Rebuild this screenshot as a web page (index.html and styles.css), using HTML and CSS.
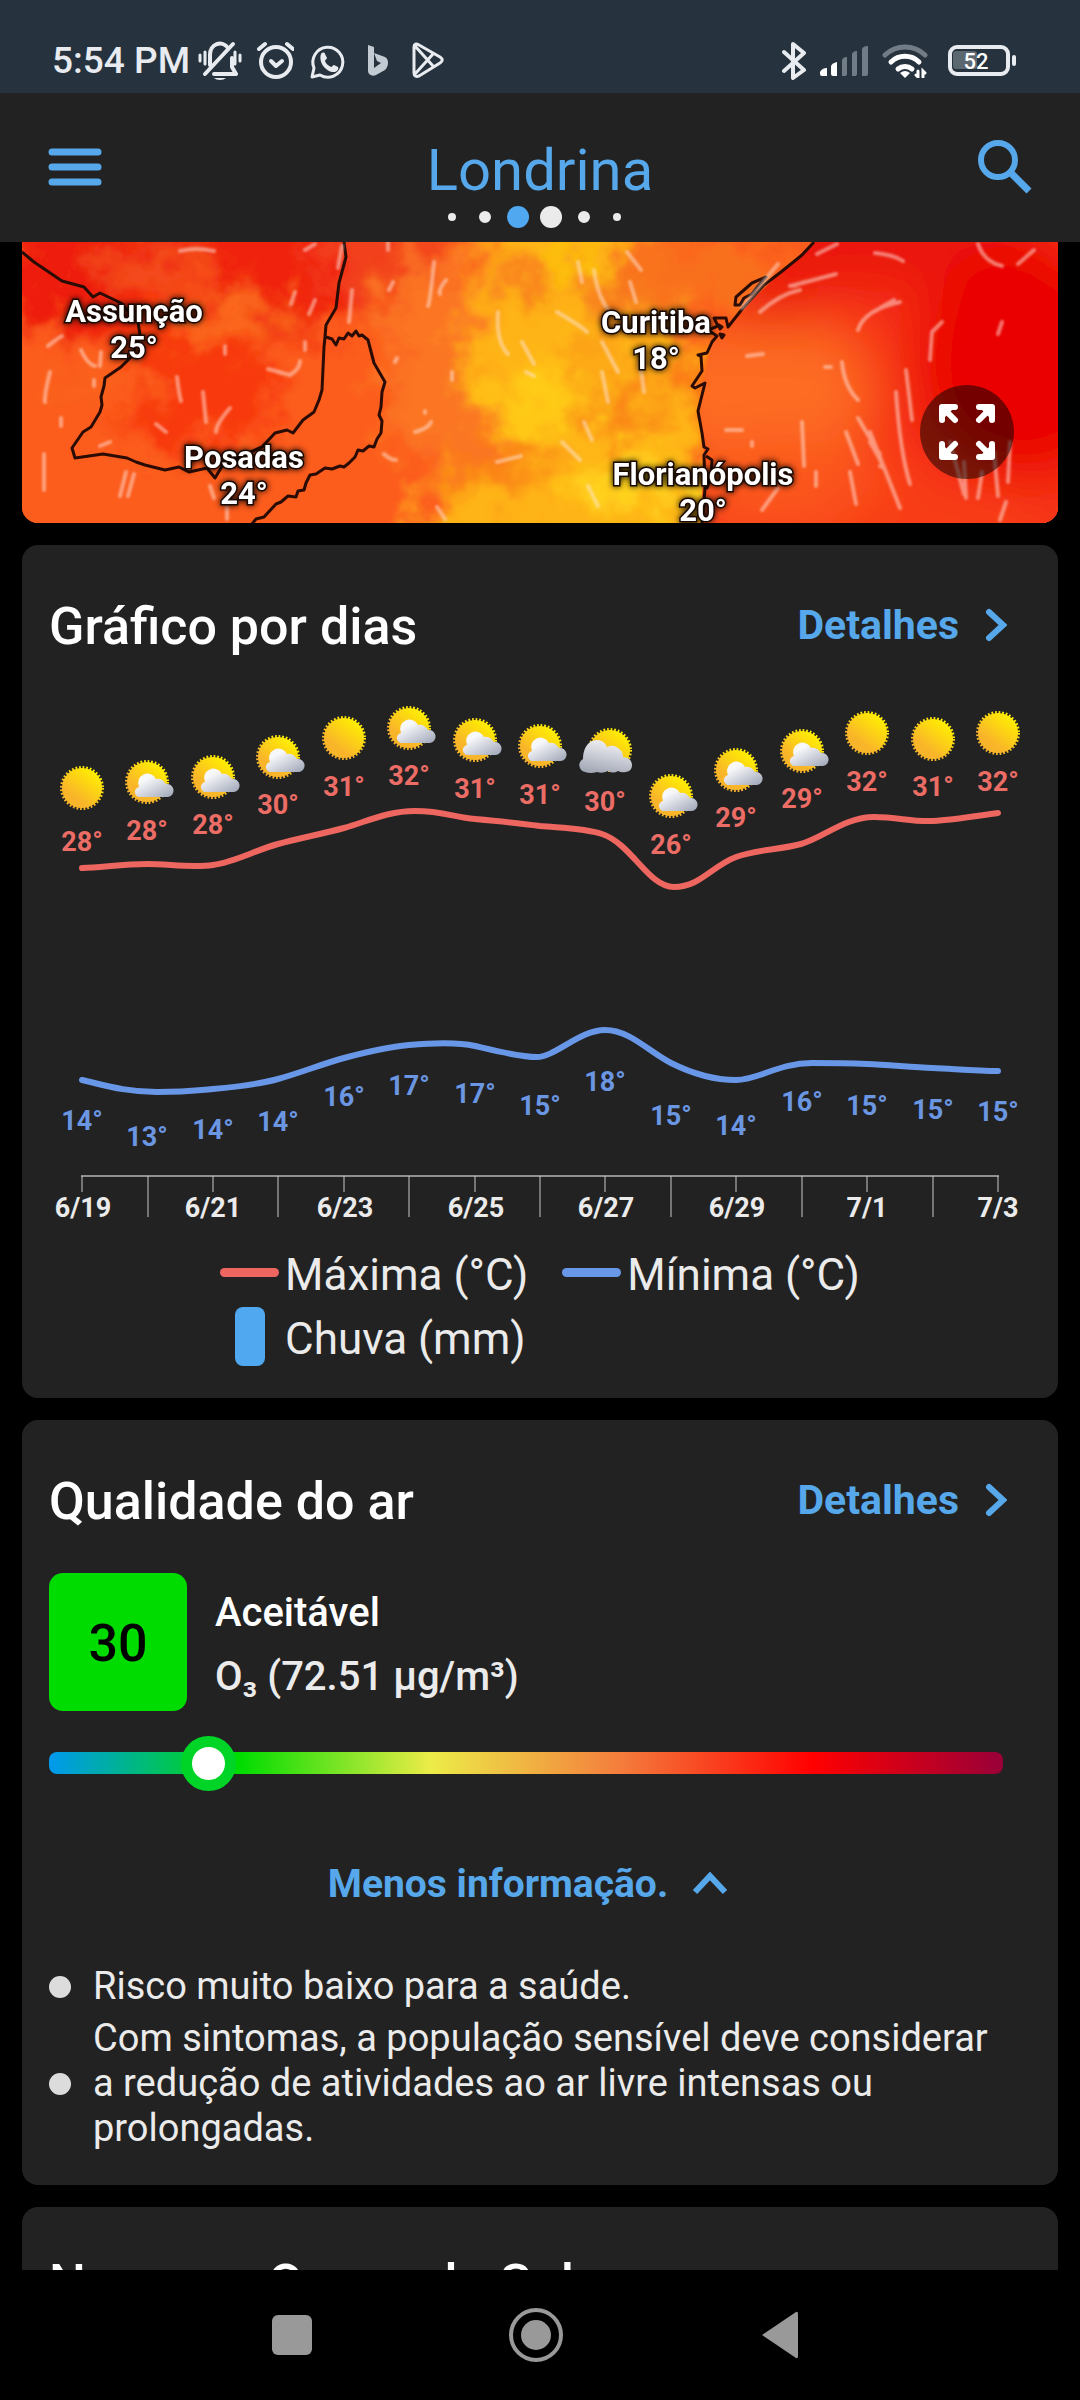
FILE: index.html
```html
<!DOCTYPE html>
<html lang="pt-BR">
<head>
  <meta charset="UTF-8" />
  <meta name="viewport" content="width=device-width, initial-scale=1" />
  <title>Londrina</title>
  <link rel="stylesheet" href="styles.css">
</head>
<body>
  <div class="status">
    <span class="time">5:54 PM</span>
    <div class="status-left">
      <svg width="44" height="40" viewBox="0 0 44 40" fill="none" stroke="#e8ecf0" stroke-linecap="round" stroke-linejoin="round">
        <path d="M12 24V14a10 11 0 0 1 18-7M34 17v9l4 7H16" stroke-width="4"/>
        <path d="M35 3L7 33" stroke-width="4"/>
        <path d="M2 14v6M7 11v12M37 11v12M42 14v6" stroke-width="3"/>
        <path d="M16 37a7 4 0 0 0 12 0z" fill="#e8ecf0" stroke="none"/>
      </svg>
      <svg width="44" height="40" viewBox="0 0 44 40" fill="none" stroke="#e8ecf0" stroke-linecap="round" stroke-linejoin="round">
        <circle cx="26" cy="21" r="15" stroke-width="4"/>
        <path d="M21 20l5 5 6-5" stroke-width="4"/>
        <path d="M9 8l6-5M43 8l-6-5" stroke-width="4"/>
      </svg>
      <svg width="44" height="40" viewBox="0 0 44 40">
        <path d="M10 36l2-9a15 15 0 1 1 6 7z" fill="none" stroke="#e8ecf0" stroke-width="3" stroke-linejoin="round"/>
        <path d="M19 13c1-2 4-2 4 0l2 4c0 1-2 2-2 3 1 3 3 4 6 6 1 0 2-2 3-2l4 2c1 1 0 4-3 5-8 1-17-9-14-18z" fill="#e8ecf0"/>
      </svg>
      <svg width="44" height="40" viewBox="0 0 44 40">
        <path d="M14 4l6 2v21l7-5-4-2-3-8 11 4c4 2 4 9 0 13l-9 5c-4 2-8-1-8-4z" fill="#c3cbd2"/>
      </svg>
      <svg width="44" height="40" viewBox="0 0 44 40" fill="none" stroke="#e8ecf0" stroke-width="3" stroke-linejoin="round">
        <path d="M8 6c0-3 2-4 5-2l21 12c3 2 3 4 0 6L13 35c-3 1-5 0-5-3zM9 5l18 20M9 33l18-20"/>
      </svg>
    </div>
    <div class="status-right">
      <svg width="24" height="38" viewBox="0 0 24 38" fill="none" stroke="#e8ecf0" stroke-width="4" stroke-linecap="round" stroke-linejoin="round">
        <path d="M2 10l20 18-11 8V2l11 9L2 29"/>
      </svg>
      <svg width="48" height="30" viewBox="0 0 48 30">
        <path d="M0 26q2-4 7-4v8H2q-2 0-2-2zM11 20q1-3 6-4v14h-4q-2 0-2-2z" fill="#fff"/>
        <path d="M22 14q1-3 5-3v17q0 2-2 2h-3zM32 8q1-3 5-3v23q0 2-2 2h-3zM42 3q1-3 6-3v28q0 2-2 2h-4z" fill="#717c86"/>
      </svg>
      <svg width="46" height="34" viewBox="0 0 46 34" fill="none" stroke="#fff" stroke-width="5" stroke-linecap="round">
        <path d="M3 11a29 29 0 0 1 40 0" stroke="#717c86"/>
        <path d="M9 18a20 20 0 0 1 28 0M16 25a11 11 0 0 1 14 0"/>
        <path d="M23 34l-5-5q5-4 10 0z" fill="#fff" stroke="none"/>
        <path d="M36 27v6l-2-2M41 33v-6l2 2" stroke-width="3"/>
      </svg>
      <svg class="batt" width="68" height="32" viewBox="0 0 68 32">
        <rect x="2" y="2" width="58" height="27" rx="7" fill="none" stroke="#e8ecf0" stroke-width="4"/>
        <rect x="5" y="6" width="24" height="18" rx="3" fill="#5c6870"/>
        <rect x="64" y="10" width="4" height="11" rx="2" fill="#e8ecf0"/>
        <text class="batt-num" x="28" y="24">52</text>
      </svg>
    </div>
  </div>

  <header class="topbar">
    <button class="icon-btn" aria-label="Menu">
      <svg width="54" height="38" viewBox="0 0 54 38" stroke="#56a8eb" stroke-width="7" stroke-linecap="round">
        <path d="M4 4h46M4 19h46M4 34h46"/>
      </svg>
    </button>
    <div class="place">
      <h1>Londrina</h1>
      <div class="dots">
        <i class="dot tiny"></i><i class="dot small"></i><i class="dot active"></i><i class="dot"></i><i class="dot small"></i><i class="dot tiny"></i>
      </div>
    </div>
    <button class="icon-btn search" aria-label="Buscar">
      <svg width="54" height="54" viewBox="0 0 54 54" fill="none" stroke="#56a8eb">
        <circle cx="20" cy="20" r="17" stroke-width="6"/>
        <path d="M33 33l18 18" stroke-width="7"/>
      </svg>
    </button>
  </header>

  <main>
    <section class="map">
      <svg class="map-img" viewBox="0 0 1036 281" preserveAspectRatio="xMidYMax slice">
        <defs>
          <filter id="heat" x="-10%" y="-20%" width="120%" height="140%">
            <feGaussianBlur stdDeviation="14" result="b"/>
            <feTurbulence type="fractalNoise" baseFrequency="0.03" numOctaves="4" seed="7"/>
            <feDisplacementMap in="b" scale="80" xChannelSelector="R" yChannelSelector="G"/>
            <feGaussianBlur stdDeviation="1"/>
          </filter>
          <filter id="sea" x="-20%" y="-20%" width="140%" height="140%">
            <feGaussianBlur stdDeviation="26"/>
          </filter>
          <filter id="soft"><feGaussianBlur stdDeviation="1"/></filter>
          <clipPath id="seaClip"><path d="M792 0L721 66 690 100 676 168 682 211 679 281H1036V0z"/></clipPath>
        </defs>
        <rect width="1036" height="281" fill="#fa5a1a"/>
        <g filter="url(#heat)">
          <rect x="-80" y="-80" width="1200" height="440" fill="#fc5c1a"/>
          <ellipse cx="70" cy="30" rx="110" ry="60" fill="#ee1c0e"/>
          <ellipse cx="240" cy="30" rx="110" ry="70" fill="#f0200e"/>
          <ellipse cx="170" cy="130" rx="90" ry="80" fill="#f8380f"/>
          <ellipse cx="130" cy="30" rx="60" ry="18" fill="#f4501a"/>
          <ellipse cx="210" cy="75" rx="60" ry="22" fill="#fb6a1c"/>
          <ellipse cx="80" cy="140" rx="60" ry="26" fill="#fb601c"/>
          <ellipse cx="370" cy="20" rx="70" ry="50" fill="#f2401a"/>
          <ellipse cx="420" cy="120" rx="60" ry="110" fill="#fb7420"/>
          <path d="M470 -40H620L660 100 690 180V330H380L430 240 480 200 440 120z" fill="#feb414"/>
          <ellipse cx="520" cy="160" rx="50" ry="35" fill="#ffcb14"/>
          <ellipse cx="610" cy="240" rx="60" ry="30" fill="#ffd21c"/>
          <ellipse cx="545" cy="20" rx="35" ry="20" fill="#fdc010"/>
          <ellipse cx="500" cy="40" rx="26" ry="18" fill="#f8701a"/>
          <ellipse cx="680" cy="30" rx="100" ry="36" fill="#f9701a"/>
          <ellipse cx="600" cy="60" rx="50" ry="20" fill="#f87a1a"/>
          <ellipse cx="595" cy="170" rx="36" ry="26" fill="#fa8418"/>
          <ellipse cx="480" cy="225" rx="50" ry="22" fill="#fb8418"/>
          <ellipse cx="660" cy="130" rx="24" ry="26" fill="#fb8418"/>
          <ellipse cx="570" cy="110" rx="24" ry="14" fill="#fb9418"/>
        </g>
        <g clip-path="url(#seaClip)">
          <g filter="url(#sea)">
            <rect x="600" y="-80" width="540" height="440" fill="#f63212"/>
            <ellipse cx="740" cy="150" rx="110" ry="80" fill="#fd6c20"/>
            <ellipse cx="770" cy="250" rx="110" ry="50" fill="#fb541c"/>
            <ellipse cx="880" cy="0" rx="150" ry="50" fill="#ea1408"/>
            <ellipse cx="750" cy="60" rx="46" ry="26" fill="#ea1008"/>
            <ellipse cx="1000" cy="120" rx="110" ry="120" fill="#ea0600"/>
            <ellipse cx="920" cy="290" rx="110" ry="50" fill="#f83c14"/>
          </g>
        </g>
        <g class="border">
          <path d="M0 10l12 10 28 19 22 6 9 10 7-4 21 10 17 19 2 13-9 22-10 10-16 11-1 8-3 11 1 8-2 7-9 15-8 5-11 16 3 10 28-4 24 4 9 4 9 3 20 5 14-3 10 5 18-4 8 10 9-15 38-16 13-14 12-3 6 3 10-13 11-8 5-12 3-10 2-43 1-10 1-12 10-17 3-25 7-26-2-15"/>
          <path d="M304 95l6 2 4 6 3-7 5 1 4-6 4 3 4-5 3 5 3-1 6 5 6 23 11 19-3 10-1 15-2 8 3 6-1 12-4 6-3 8-5-1-6 5-5-1-3 7-6 6-5 4-4-1-8 3-7-1-9 6-6 1-4 8-2 7-6 1-2 6-8-1-7 6-5 2-12 13-8 2-4 5"/>
          <path d="M792 0l-12 13-21 17-17 13-21 23-15 19-2-9-12 0 4 8-10 4 9 6-5 6-5 11-9 2 3 1 1 15-10 15 3 2 10-5-7 28 4 22 2 14 4 2-4 6 1 34-3 36"/>
          <path d="M744 35l-14 6-16 14-1 8 5 0 4-7 8-4 6-8zM697 83l3 2-2 2zM698 92l4 1-2 3zM684 214l6 4-1 16-4 12-3-8"/>
        </g>
        <g class="wind" filter="url(#soft)">
          <path d="M158 9q16-4 34 0M283 8l10-6M366 0v8M412 20q-4 40-6 44M424 38q-8 10-6 14M371 40l-4 8M320 4l-4 22M330 48l-3 32M273 50l-4 12M293 58l-6 14M26 104q10-8 14-10M59 108q6 14 14 16M79 110l-1 14M203 104v8M283 100v8M28 130q-6 24-5 30M155 135q2 18 4 24M181 150l3 30M208 166q-14 16-14 24M72 138v6M39 176v8M22 212v36M104 230l-6 24M112 232l-6 22M134 182l10 8M188 244l4 12M246 127l22 6q10-6 10-14M375 116l-2 4M430 130v8M403 169v2M393 190q14-4 16-10M362 212q6 6 12 6M78 204l10-4M205 265v12M415 265l8 12M476 70q-2 30 10 42M500 100l12 22M504 130l8 4M475 220l24-6M560 40l-4-20M572 28q4 30 18 44M605 10l14 18M608 40l6 20M535 70q24 14 30 20M580 100l16 30M580 130l6 30M618 120l4 30M540 200l18 18M562 180l8 18M566 244l10 20"/>
          <path d="M795 12l20-10M853 11q20 2 28 8M768 44q16-4 46-12M782 40l-10 4M720 66l36-44M738 70q20-18 40-22M836 88q6-20 42-28M858 66l14-8M920 80l-10 10-2 28M980 80l-4 12M956 2q6 18 24 22M1012 8l-16 14M725 114l16-2M803 125h6M820 120q2 24 16 38M884 128l6 50M836 176q20 34 22 36M824 190l12 32M848 200q18 30 10 24M780 180l2 44M794 230v14M704 188h16M730 200v4M848 190l30 76M874 150q4 60 14 92M828 230l6 32M740 268l16-22M942 220l2 36M928 200l14 52M972 210l4 44M960 230l-4 26M988 200l-2 40M984 260l-6 18"/>
        </g>
        <g class="city">
          <text x="112" y="80">Assunção</text><text x="112" y="116">25°</text>
          <text x="222" y="226">Posadas</text><text x="222" y="262">24°</text>
          <text x="634" y="91">Curitiba</text><text x="634" y="127">18°</text>
          <text x="681" y="243">Florianópolis</text><text x="681" y="279">20°</text>
        </g>
      </svg>
      <button class="expand" aria-label="Tela cheia">
        <svg width="56" height="56" viewBox="0 0 56 56" fill="#fff" stroke="#fff" stroke-width="6" stroke-linecap="round" stroke-linejoin="round">
          <path d="M3 16V3h13M5 5l11 11M40 3h13v13M51 5L40 16M3 40v13h13M5 51l11-11M53 40v13H40M51 51L40 40"/>
          <path d="M3 3h9l-9 9zM53 3v9l-9-9zM3 53v-9l9 9zM53 53h-9l9-9z" stroke="none"/>
        </svg>
      </button>
    </section>

    <section class="card">
      <div class="card-head">
        <h2>Gráfico por dias</h2>
        <a class="more" href="#dias">Detalhes
          <svg width="22" height="34" viewBox="0 0 22 34"><path d="M4 4l14 13L4 30"/></svg>
        </a>
      </div>
      <svg class="chart" id="dias" viewBox="0 0 1036 540">
        <defs>
          <linearGradient id="sunFill" x1="0.8" y1="0.05" x2="0.3" y2="0.7">
            <stop offset="0" stop-color="#fff000"/><stop offset="1" stop-color="#f9b52a"/>
          </linearGradient>
          <linearGradient id="cloudFill" x1="0.2" y1="0" x2="1" y2="0.9">
            <stop offset="0.2" stop-color="#f7f8fa"/><stop offset="1" stop-color="#a4aabb"/>
          </linearGradient>
          <linearGradient id="darkFill" x1="0.6" y1="0" x2="0.3" y2="1">
            <stop offset="0" stop-color="#f2f3f6"/><stop offset="1" stop-color="#a2a7b5"/>
          </linearGradient>
          <g id="sun">
            <circle r="20" fill="url(#sunFill)"/>
            <circle r="20" fill="none" stroke="url(#sunFill)" stroke-width="4" stroke-dasharray="1.7 1.79"/>
          </g>
          <g id="sunCloud">
            <use href="#sun"/>
            <path d="M-6 15a5 5 0 0 1-2-10 9 9 0 0 1 17-8q6-1 10 5a6 6 0 0 1 2 13z" fill="url(#cloudFill)"/>
          </g>
          <g id="cloudy">
            <use href="#sun" x="5"/>
            <path d="M-20 22a7 7 0 0 1-2-13c0-9 4-19 14-19q7 0 10 7 6-3 11 1 5 3 5 9 9 1 9 8 0 6-6 7-5 1-8-1-5 3-10 0-6 3-11 1-6 2-12 0z" fill="url(#darkFill)"/>
          </g>
        </defs>
        <use href="#sun" x="60" y="98"/>
        <use href="#sunCloud" x="125" y="92"/>
        <use href="#sunCloud" x="191" y="87"/>
        <use href="#sunCloud" x="256" y="67"/>
        <use href="#sun" x="322" y="48"/>
        <use href="#sunCloud" x="387" y="38"/>
        <use href="#sunCloud" x="453" y="50"/>
        <use href="#sunCloud" x="518" y="56"/>
        <use href="#cloudy" x="583" y="60"/>
        <use href="#sunCloud" x="649" y="106"/>
        <use href="#sunCloud" x="714" y="80"/>
        <use href="#sunCloud" x="780" y="61"/>
        <use href="#sun" x="845" y="43"/>
        <use href="#sun" x="911" y="49"/>
        <use href="#sun" x="976" y="43"/>
        <g class="max">
          <text x="60" y="161">28°</text><text x="125" y="150">28°</text><text x="191" y="144">28°</text>
          <text x="256" y="124">30°</text><text x="322" y="106">31°</text><text x="387" y="95">32°</text>
          <text x="453" y="108">31°</text><text x="518" y="114">31°</text><text x="583" y="121">30°</text>
          <text x="649" y="164">26°</text><text x="714" y="137">29°</text><text x="780" y="118">29°</text>
          <text x="845" y="101">32°</text><text x="911" y="106">31°</text><text x="976" y="101">32°</text>
          <path d="M60 178C82 177 103 174 125 174S169 178 191 175 234 160 256 154 300 144 322 138 365 121 393 121 431 127 453 129 496 133 518 136C540 138 562 138 580 144 610 154 626 197 652 197 678 197 690 176 714 167 736 159 757 160 779 154 801 148 823 127 852 127 876 127 889 132 911 131S954 126 976 123"/>
        </g>
        <g class="min">
          <path d="M60 390C82 395 103 402 135 402S169 401 191 399 234 395 256 389 300 374 322 368 365 357 387 355 436 352 453 356 497 367 515 367 558 340 583 340 627 362 649 373 692 390 714 390 757 373 790 373 823 373 845 374 889 377 911 378 954 381 976 381"/>
          <text x="60" y="440">14°</text><text x="125" y="456">13°</text><text x="191" y="449">14°</text>
          <text x="256" y="441">14°</text><text x="322" y="416">16°</text><text x="387" y="405">17°</text>
          <text x="453" y="413">17°</text><text x="518" y="425">15°</text><text x="583" y="401">18°</text>
          <text x="649" y="435">15°</text><text x="714" y="445">14°</text><text x="780" y="421">16°</text>
          <text x="845" y="425">15°</text><text x="911" y="429">15°</text><text x="976" y="431">15°</text>
        </g>
        <path class="axis" d="M59 486H977"/>
        <path class="ticks" d="M60 486v16M191 486v16M322 486v16M453 486v16M583 486v16M714 486v16M845 486v16M976 486v16M126 486v41M256 486v41M387 486v41M518 486v41M649 486v41M780 486v41M911 486v41"/>
        <g class="dates">
          <text x="61" y="527">6/19</text><text x="191" y="527">6/21</text><text x="323" y="527">6/23</text>
          <text x="454" y="527">6/25</text><text x="584" y="527">6/27</text><text x="715" y="527">6/29</text>
          <text x="845" y="527">7/1</text><text x="976" y="527">7/3</text>
        </g>
      </svg>
      <div class="legend">
        <span class="key"><i class="line red"></i>Máxima (°C)</span>
        <span class="key"><i class="line blue"></i>Mínima (°C)</span>
        <span class="key"><i class="bar"></i>Chuva (mm)</span>
      </div>
    </section>

    <section class="card">
      <div class="card-head">
        <h2>Qualidade do ar</h2>
        <a class="more" href="#ar">Detalhes
          <svg width="22" height="34" viewBox="0 0 22 34"><path d="M4 4l14 13L4 30"/></svg>
        </a>
      </div>
      <div class="aqi" id="ar">
        <div class="aqi-value">30</div>
        <div class="aqi-text">
          <div>Aceitável</div>
          <div class="aqi-sub">O₃ (72.51 µg/m³)</div>
        </div>
      </div>
      <input class="scale" type="range" min="0" max="205" value="30" aria-label="Índice de qualidade do ar" />
      <button class="toggle">Menos informação.
        <svg width="36" height="24" viewBox="0 0 36 24"><path d="M3 20L18 4l15 16"/></svg>
      </button>
      <ul class="notes">
        <li>Risco muito baixo para a saúde.</li>
        <li>Com sintomas, a população sensível deve considerar a redução de atividades ao ar livre intensas ou prolongadas.</li>
      </ul>
    </section>

    <section class="card">
      <div class="card-head">
        <h2>Nascer e Ocaso do Sol</h2>
      </div>
    </section>
  </main>

  <nav class="sysnav">
    <button aria-label="Recentes"><svg width="56" height="56" viewBox="0 0 56 56"><rect x="8" y="8" width="40" height="40" rx="6"/></svg></button>
    <button aria-label="Início"><svg width="56" height="56" viewBox="0 0 56 56"><circle cx="28" cy="28" r="25" fill="none" stroke="#999" stroke-width="4"/><circle cx="28" cy="28" r="15"/></svg></button>
    <button aria-label="Voltar"><svg width="56" height="56" viewBox="0 0 56 56"><path d="M10 28L44 5q2-1 2 2v42q0 3-2 2z"/></svg></button>
  </nav>
</body>
</html>
```

FILE: styles.css
```css
* {
  box-sizing: border-box;
}
body {
  margin: 0;
  height: 100vh;
  display: flex;
  flex-direction: column;
  overflow: hidden;
  background: #000;
  color: #ebebeb;
  font-family: Roboto, "Liberation Sans", sans-serif;
}
h1, h2 {
  margin: 0;
  font-weight: 500;
}
button {
  background: none;
  border: 0;
  padding: 0;
  font-family: inherit;
  cursor: pointer;
}
svg {
  display: block;
}

/* system bar */
.status {
  height: 93px;
  flex: none;
  padding: 28px 64px 0 52px;
  display: flex;
  align-items: center;
  background: #26323d;
}
.time {
  font-size: 37px;
  font-weight: 500;
  color: #e8ecf0;
  margin-right: 8px;
}
.status-left {
  display: flex;
  gap: 8px;
}
.status-right {
  margin-left: auto;
  display: flex;
  align-items: center;
  gap: 14px;
}
.batt {
  margin-left: 6px;
}
.batt-num {
  font-size: 22px;
  font-weight: 500;
  text-anchor: middle;
  fill: #fff;
}

/* app bar */
.topbar {
  flex: none;
  padding: 46px 48px 14px;
  display: flex;
  justify-content: space-between;
  align-items: flex-start;
  background: #222;
}
.icon-btn {
  width: 54px;
  height: 56px;
}
.place {
  text-align: center;
}
h1 {
  font-size: 58px;
  line-height: 62px;
  font-weight: 400;
  color: #56a8eb;
}
.dots {
  margin: 5px 12px 0 0;
  display: flex;
  justify-content: center;
  align-items: center;
  gap: 11px;
  height: 22px;
}
.dot {
  width: 22px;
  height: 22px;
  flex: none;
  border-radius: 50%;
  background: #ebebeb;
  border: 0 solid #222;
}
.dot.active {
  background: #50a8f0;
}
.dot.small {
  border-width: 5px;
}
.dot.tiny {
  border-width: 7px;
}

main {
  flex: 1;
  min-height: 0;
  overflow: hidden;
  padding: 0 22px;
  display: flex;
  flex-direction: column;
  gap: 22px;
}

/* map */
.map {
  position: relative;
  flex: none;
  overflow: hidden;
  border-radius: 0 0 16px 16px;
}
.map-img {
  width: 100%;
}
.border path {
  fill: none;
  stroke: #2a0c04;
  stroke-width: 3;
  stroke-linejoin: round;
}
.wind path {
  fill: none;
  stroke: #ffe6dc;
  stroke-opacity: 0.5;
  stroke-width: 4;
  stroke-linecap: round;
}
.city {
  font-size: 31px;
  font-weight: 700;
  text-anchor: middle;
  fill: #fff;
  stroke: #1a0a04;
  stroke-width: 3;
  paint-order: stroke;
  filter: drop-shadow(0 0 3px #000);
}
.expand {
  position: absolute;
  right: 44px;
  bottom: 44px;
  width: 94px;
  height: 94px;
  border-radius: 50%;
  background: rgba(0,0,0,0.5);
}
.expand svg, .icon-btn svg {
  margin: auto;
}

/* cards */
.card {
  flex: none;
  padding: 50px 27px 27px;
  border-radius: 16px;
  background: #222;
}
.card-head {
  display: flex;
  justify-content: space-between;
  align-items: center;
}
h2 {
  font-size: 52px;
  line-height: 54px;
  color: #fff;
}
.more {
  display: flex;
  align-items: center;
  gap: 26px;
  padding: 0 24px 4px 0;
  font-size: 41px;
  line-height: 60px;
  font-weight: 700;
  color: #56a8eb;
  text-decoration: none;
}
.more path, .toggle path {
  fill: none;
  stroke: #56a8eb;
  stroke-width: 6;
  stroke-linecap: round;
}
.toggle path {
  stroke-linecap: butt;
}

/* chart */
.chart {
  width: calc(100% + 54px);
  margin: 31px -27px 13px;
}
.chart text {
  font-size: 27px;
  font-weight: 700;
  text-anchor: middle;
}
.chart .max path, .chart .min path {
  fill: none;
  stroke-width: 6;
  stroke-linecap: round;
}
.max text {
  fill: #ec6d66;
}
.max path {
  stroke: #ee6660;
}
.min text {
  fill: #6b96e2;
}
.min path {
  stroke: #6997e8;
}
.dates text {
  fill: #ebebeb;
}
.axis {
  stroke: #909090;
  stroke-width: 2;
}
.ticks {
  stroke: #c8c8c8;
  stroke-width: 1;
}
.legend {
  display: grid;
  grid-template-columns: auto auto;
  justify-content: center;
  column-gap: 34px;
  font-size: 44px;
  line-height: 64px;
}
.key {
  display: flex;
  align-items: center;
  gap: 6px;
}
.key i {
  margin-bottom: 5px;
}
.line {
  width: 59px;
  height: 9px;
  border-radius: 5px;
}
.red {
  background: #ee6660;
}
.blue {
  background: #6997e8;
}
.key .bar {
  width: 30px;
  height: 59px;
  margin: 0 14px 5px 15px;
  border-radius: 8px;
  background: #50a8f0;
}

/* air quality */
.aqi {
  margin-top: 39px;
  display: flex;
  align-items: center;
  gap: 28px;
}
.aqi-value {
  width: 138px;
  height: 138px;
  border-radius: 14px;
  background: #00dc00;
  color: #000;
  font-size: 52px;
  font-weight: 500;
  line-height: 142px;
  text-align: center;
}
.aqi-text {
  padding-top: 5px;
  font-size: 40px;
  line-height: 64px;
  font-weight: 500;
  color: #fff;
}
.aqi-sub {
  color: #ebebeb;
}
.scale {
  display: block;
  appearance: none;
  width: calc(100% - 28px);
  height: 56px;
  margin: 24px 0 0;
  background: none;
}
.scale::-webkit-slider-runnable-track {
  height: 22px;
  border-radius: 8px;
  background: linear-gradient(90deg, #0099ee, #00dc00 20%, #ecec48 40%, #f47c3c 60%, #ff0000 80%, #990038);
}
.scale::-webkit-slider-thumb {
  appearance: none;
  width: 55px;
  height: 55px;
  margin-top: -16px;
  border: 11px solid #00d426;
  border-radius: 50%;
  background: #fff;
}
.toggle {
  display: flex;
  align-items: center;
  gap: 24px;
  margin: 69px auto 56px;
  padding-right: 24px;
  font-size: 39px;
  line-height: 48px;
  font-weight: 700;
  color: #56a8eb;
}
.notes {
  display: flex;
  flex-direction: column;
  gap: 7px;
  margin: 0;
  padding: 0 20px 7px 0;
  list-style: none;
  font-size: 38px;
  line-height: 45px;
  font-weight: 400;
}
.notes li {
  display: flex;
  align-items: center;
  gap: 22px;
}
.notes li::before {
  content: "";
  flex: none;
  width: 22px;
  height: 22px;
  border-radius: 50%;
  background: #dcdcdc;
}

/* android buttons */
.sysnav {
  flex: none;
  height: 130px;
  padding-right: 8px;
  display: flex;
  justify-content: center;
  align-items: center;
  gap: 188px;
  background: #000;
}
.sysnav svg {
  fill: #999;
}
```
